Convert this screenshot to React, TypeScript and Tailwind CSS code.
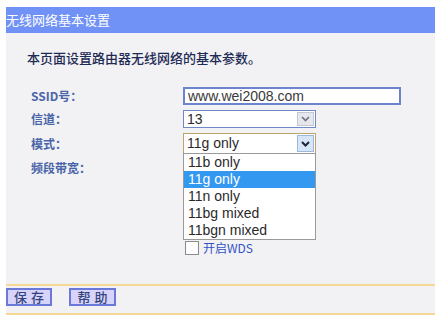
import React from 'react';

const cjk = { fontFamily: '"SimSun", "Noto Sans CJK SC", sans-serif' };
const arial = { fontFamily: '"Liberation Sans", Arial, sans-serif' };

const modes = ['11b only', '11g only', '11n only', '11bg mixed', '11bgn mixed'];

const Chevron: React.FC<{ dark?: boolean }> = ({ dark }) => (
  <svg width="9" height="6" viewBox="0 0 9 6">
    <path
      d="M1 1 L4.5 4.5 L8 1"
      fill="none"
      stroke={dark ? '#1e2636' : '#6b7180'}
      strokeWidth={dark ? 2 : 1.6}
    />
  </svg>
);

const Select: React.FC<{ value: string; open?: boolean }> = ({ value, open }) => (
  <div
    className={`relative flex h-full w-[133px] items-center border bg-white ${
      open ? 'border-[#bca46a]' : 'border-[#7088c8]'
    }`}
  >
    <span className="flex-1 pl-[3px] text-[14px] text-[#2a2a2a]" style={arial}>
      {value}
    </span>
    <div
      className={`mr-[1px] flex h-[calc(100%-2px)] w-[17px] items-center justify-center border ${
        open ? 'border-[#9cb8dc] bg-[#d6e6f8]' : 'border-[#c4c8d0] bg-[#e6e7ec]'
      }`}
    >
      <Chevron dark={open} />
    </div>
    {open && (
      <div className="absolute left-[-1px] top-full z-10 w-[133px] border border-[#9a9a9a] bg-white">
        {modes.map((m) => (
          <div
            key={m}
            className={`h-[17px] pl-[4px] text-[14px] leading-[17px] ${
              m === '11g only' ? 'bg-[#3399f0] text-white' : 'text-[#2a2a2a]'
            }`}
            style={arial}
          >
            {m}
          </div>
        ))}
      </div>
    )}
  </div>
);

const Label: React.FC<{ children: React.ReactNode }> = ({ children }) => (
  <div className="w-[152px] text-[12px] font-bold text-[#4a64a8]" style={cjk}>
    {children}
  </div>
);

export default function App() {
  return (
    <div className="h-[324px] w-[446px] overflow-hidden bg-white pl-[6px] pt-[7px]">
      <div className="w-[429px]">
        <div
          className="h-[26px] bg-[#7092f6] text-[13px] leading-[26px] text-white"
          style={cjk}
        >
          无线网络基本设置
        </div>

        <div className="flex h-[251px] flex-col bg-[#f2f2f4] pl-[21px] pt-[15px]">
          <div className="text-[13px] font-medium leading-[20px] text-[#1e2b55]" style={cjk}>
            本页面设置路由器无线网络的基本参数。
          </div>

          <div className="mt-[19px] flex flex-col gap-[5px] pl-[4px]">
            <div className="flex h-[18px] items-center">
              <Label>SSID号：</Label>
              <div
                className="flex h-full w-[218px] items-center border-2 border-[#6a84d0] bg-white pl-[3px] text-[14px] text-[#3a3a3a]"
                style={arial}
              >
                www.wei2008.com
              </div>
            </div>
            <div className="flex h-[18px] items-center">
              <Label>信道：</Label>
              <Select value="13" />
            </div>
            <div className="flex h-[21px] items-center">
              <Label>模式：</Label>
              <Select value="11g only" open />
            </div>
            <div className="flex h-[18px] items-center">
              <Label>频段带宽：</Label>
            </div>
          </div>

          <div className="mt-[62px] flex items-center pl-[158px]">
            <div className="h-[14px] w-[14px] border border-[#8a8a8a] bg-white" />
            <span className="ml-[4px] text-[12px] text-[#3352c4]" style={cjk}>
              开启WDS
            </span>
          </div>
        </div>

        <div className="flex h-[31px] gap-[17px] border-y-2 border-[#f6d896] bg-[#f2f2f4] pt-[2px]">
          <button
            className="h-[18px] w-[46px] border-2 border-[#6a78d8] bg-[#d8d3fa] pl-[4px] text-[13px] font-medium leading-[14px] tracking-[4px] text-[#34457e]"
            style={cjk}
          >
            保存
          </button>
          <button
            className="h-[18px] w-[47px] border-2 border-[#6a78d8] bg-[#d8d3fa] pl-[4px] text-[13px] font-medium leading-[14px] tracking-[4px] text-[#34457e]"
            style={cjk}
          >
            帮助
          </button>
        </div>
      </div>
    </div>
  );
}
